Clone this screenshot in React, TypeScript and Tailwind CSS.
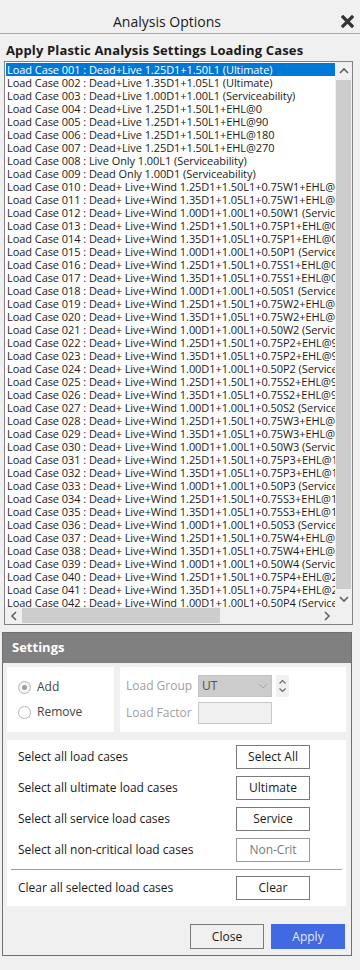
const font = "font-['Open_Sans',sans-serif]";

function buildRows(): string[] {
  const rows = [
    "Load Case 001 : Dead+Live 1.25D1+1.50L1 (Ultimate)",
    "Load Case 002 : Dead+Live 1.35D1+1.05L1 (Ultimate)",
    "Load Case 003 : Dead+Live 1.00D1+1.00L1 (Serviceability)",
    "Load Case 004 : Dead+Live 1.25D1+1.50L1+EHL@0",
    "Load Case 005 : Dead+Live 1.25D1+1.50L1+EHL@90",
    "Load Case 006 : Dead+Live 1.25D1+1.50L1+EHL@180",
    "Load Case 007 : Dead+Live 1.25D1+1.50L1+EHL@270",
    "Load Case 008 : Live Only 1.00L1 (Serviceability)",
    "Load Case 009 : Dead Only 1.00D1 (Serviceability)",
  ];
  const angles = ["0", "90", "180", "270"];
  let n = 10;
  for (let g = 1; g <= 4; g++) {
    for (const t of ["W", "P", "S"]) {
      const id = () => String(n++).padStart(3, "0");
      rows.push(`Load Case ${id()} : Dead+ Live+Wind 1.25D1+1.50L1+0.75${t}${g}+EHL@${angles[g - 1]}`);
      rows.push(`Load Case ${id()} : Dead+ Live+Wind 1.35D1+1.05L1+0.75${t}${g}+EHL@${angles[g - 1]}`);
      rows.push(`Load Case ${id()} : Dead+ Live+Wind 1.00D1+1.00L1+0.50${t}${g} (Serviceability)`);
    }
  }
  return rows.slice(0, 43);
}

function Chevron({ dir }: { dir: "up" | "down" | "left" | "right" }) {
  const d = {
    up: "M1 6 L5 2 L9 6",
    down: "M1 2 L5 6 L9 2",
    left: "M6 1 L2 5 L6 9",
    right: "M2 1 L6 5 L2 9",
  }[dir];
  const vert = dir === "up" || dir === "down";
  return (
    <svg width={vert ? 10 : 8} height={vert ? 8 : 10} viewBox={vert ? "0 0 10 8" : "0 0 8 10"}>
      <path d={d} fill="none" stroke="#606060" strokeWidth="1.6" />
    </svg>
  );
}

function SettingRow({ label, button, muted }: { label: string; button: string; muted?: boolean }) {
  return (
    <div className="flex items-center h-6 pl-[11px]">
      <span className="flex-1 text-[12px] text-[#1a1a1a]">{label}</span>
      <button
        className={`w-[74px] h-6 mr-[36px] border text-[12px] bg-white ${
          muted ? "border-[#9a9a9a] text-[#7a7a7a]" : "border-[#7a7a7a] text-[#1a1a1a]"
        }`}
      >
        {button}
      </button>
    </div>
  );
}

export default function App() {
  const rows = buildRows();
  return (
    <div className={`w-[360px] h-[970px] bg-[#f0f0f0] ${font} text-[#1a1a1a] overflow-hidden`}>
      {/* title bar */}
      <div className="flex items-center h-[34px] border-b border-[#a8a8a8]">
        <div className="flex-1 text-center text-[14px] pt-[9px]">Analysis Options</div>
        <div className="w-[26px] flex items-center justify-center pt-[9px]">
          <svg width="13" height="13" viewBox="0 0 13 13">
            <path d="M2 2 L11 11 M11 2 L2 11" stroke="#333" strokeWidth="3.2" strokeLinecap="square" />
          </svg>
        </div>
      </div>

      <div className="px-[6px] pt-[6px] text-[13px] font-bold leading-[20px] tracking-[0.15px]">
        Apply Plastic Analysis Settings Loading Cases
      </div>

      {/* list box */}
      <div className="ml-[4px] mt-[1px] w-[349px] h-[564px] border border-[#828282] bg-white flex flex-col">
        <div className="flex flex-1 min-h-0">
          <div className="flex-1 overflow-hidden pt-[1px] pl-[1px]">
            {rows.map((r, i) => (
              <div
                key={i}
                className={`h-[13px] leading-[13px] pl-[1px] text-[11px] tracking-[-0.06px] whitespace-nowrap ${
                  i === 0 ? "bg-[#0078d7] text-white" : "text-[#1a1a1a]"
                }`}
              >
                {r}
              </div>
            ))}
          </div>
          <div className="w-[17px] bg-[#f0f0f0] flex flex-col items-center">
            <div className="h-[17px] flex items-center justify-center">
              <Chevron dir="up" />
            </div>
            <div className="flex-1 w-[15px] bg-[#cdcdcd] my-[1px]" />
            <div className="h-[17px] flex items-center justify-center">
              <Chevron dir="down" />
            </div>
          </div>
        </div>
        <div className="h-[17px] flex bg-[#f0f0f0]">
          <div className="w-[17px] flex items-center justify-center">
            <Chevron dir="left" />
          </div>
          <div className="flex-1 flex items-center">
            <div className="w-[198px] h-[15px] bg-[#cdcdcd]" />
          </div>
          <div className="w-[17px] flex items-center justify-center">
            <Chevron dir="right" />
          </div>
          <div className="w-[17px] bg-[#f0f0f0]" />
        </div>
      </div>

      {/* settings panel */}
      <div className="ml-[2px] mt-[7px] w-[350px] h-[324px] border border-[#707070] flex flex-col">
        <div className="h-[30px] bg-[#808080] text-white font-bold text-[13px] flex items-center pl-[9px]">
          Settings
        </div>
        <div className="pl-[4px] pr-[5px] pt-[4px] flex flex-col gap-[8px]">
          <div className="flex gap-[6px] h-[65px]">
            <div className="w-[107px] bg-white flex flex-col justify-center gap-[9px] pl-[11px] text-[12px]">
              <div className="flex items-center gap-[6px] h-[16px]">
                <span className="w-[13px] h-[13px] rounded-full border border-[#b5b5b5] bg-[#f4f4f4] flex items-center justify-center">
                  <span className="w-[5px] h-[5px] rounded-full bg-[#a0a0a0]" />
                </span>
                <span className="text-[#444]">Add</span>
              </div>
              <div className="flex items-center gap-[6px] h-[16px]">
                <span className="w-[13px] h-[13px] rounded-full border border-[#b5b5b5] bg-white" />
                <span className="text-[#444]">Remove</span>
              </div>
            </div>
            <div className="flex-1 bg-white flex flex-col justify-center gap-[5px] pl-[6px] text-[12px] text-[#a0a0a0]">
              <div className="flex items-center h-[22px]">
                <span className="w-[72px]">Load Group</span>
                <div className="w-[74px] h-[22px] bg-[#cccccc] border border-[#c4c4c4] flex items-center justify-between pl-[3px] pr-[3px] text-[#505050]">
                  <span>UT</span>
                  <svg width="10" height="6" viewBox="0 0 10 6">
                    <path d="M1 1 L5 5 L9 1" fill="none" stroke="#a8a8a8" strokeWidth="1" />
                  </svg>
                </div>
                <div className="ml-[4px] w-[13px] h-[22px] bg-[#f0f0f0] flex flex-col items-center justify-center gap-[4px]">
                  <svg width="7" height="4" viewBox="0 0 7 4">
                    <path d="M0.5 3.5 L3.5 0.5 L6.5 3.5" fill="none" stroke="#707070" strokeWidth="1.2" />
                  </svg>
                  <svg width="7" height="4" viewBox="0 0 7 4">
                    <path d="M0.5 0.5 L3.5 3.5 L6.5 0.5" fill="none" stroke="#707070" strokeWidth="1.2" />
                  </svg>
                </div>
              </div>
              <div className="flex items-center h-[22px]">
                <span className="w-[72px]">Load Factor</span>
                <div className="w-[74px] h-[22px] bg-[#f0f0f0] border border-[#c8c8c8]" />
              </div>
            </div>
          </div>

          <div className="bg-white h-[166px] pt-[5px] flex flex-col">
            <div className="flex flex-col gap-[7px]">
              <SettingRow label="Select all load cases" button="Select All" />
              <SettingRow label="Select all ultimate load cases" button="Ultimate" />
              <SettingRow label="Select all service load cases" button="Service" />
              <SettingRow label="Select all non-critical load cases" button="Non-Crit" muted />
            </div>
            <div className="mx-[4px] mt-[7px] mb-[6px] h-px bg-[#a0a0a0]" />
            <SettingRow label="Clear all selected load cases" button="Clear" />
          </div>
        </div>
        <div className="flex justify-end gap-[7px] pr-[6px] mt-[18px]">
          <button className="w-[74px] h-[25px] border border-[#7a7a7a] bg-[#f0f0f0] text-[12px] text-[#1a1a1a]">
            Close
          </button>
          <button className="w-[74px] h-[25px] bg-[#4169e1] text-[12px] text-[#e4ebfb]">Apply</button>
        </div>
      </div>
    </div>
  );
}
